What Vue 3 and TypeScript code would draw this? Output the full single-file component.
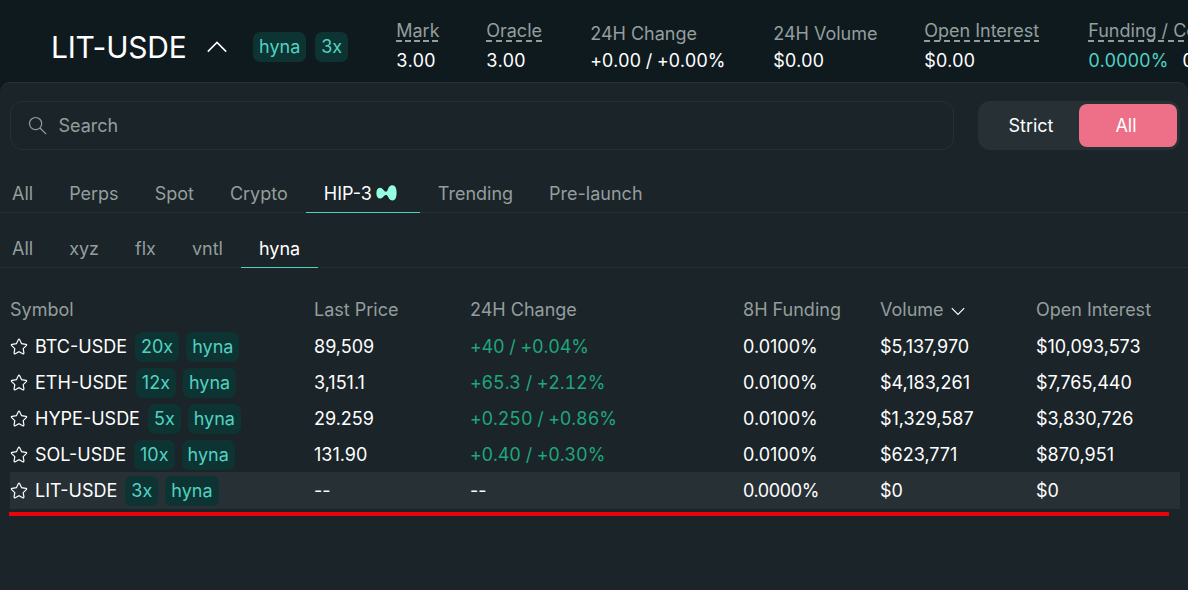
<script setup lang="ts">
interface Stat {
  label: string
  value: string
  dashed: boolean
  slot: string
}
interface Market {
  symbol: string
  leverage: string
  price: string
  change: string
  funding: string
  volume: string
  interest: string
  active?: boolean
}

const stats: Stat[] = [
  { label: 'Mark', value: '3.00', dashed: true, slot: 'mark' },
  { label: 'Oracle', value: '3.00', dashed: true, slot: 'oracle' },
  { label: '24H Change', value: '+0.00 / +0.00%', dashed: false, slot: 'change' },
  { label: '24H Volume', value: '$0.00', dashed: false, slot: 'volume' },
  { label: 'Open Interest', value: '$0.00', dashed: true, slot: 'interest' },
]
const categories = ['All', 'Perps', 'Spot', 'Crypto', 'HIP-3', 'Trending', 'Pre-launch']
const venues = ['All', 'xyz', 'flx', 'vntl', 'hyna']
const columns = ['Symbol', 'Last Price', '24H Change', '8H Funding', 'Volume', 'Open Interest']
const markets: Market[] = [
  { symbol: 'BTC-USDE', leverage: '20x', price: '89,509', change: '+40 / +0.04%', funding: '0.0100%', volume: '$5,137,970', interest: '$10,093,573' },
  { symbol: 'ETH-USDE', leverage: '12x', price: '3,151.1', change: '+65.3 / +2.12%', funding: '0.0100%', volume: '$4,183,261', interest: '$7,765,440' },
  { symbol: 'HYPE-USDE', leverage: '5x', price: '29.259', change: '+0.250 / +0.86%', funding: '0.0100%', volume: '$1,329,587', interest: '$3,830,726' },
  { symbol: 'SOL-USDE', leverage: '10x', price: '131.90', change: '+0.40 / +0.30%', funding: '0.0100%', volume: '$623,771', interest: '$870,951' },
  { symbol: 'LIT-USDE', leverage: '3x', price: '--', change: '--', funding: '0.0000%', volume: '$0', interest: '$0', active: true },
]
</script>

<template>
  <div class="app">
    <header class="top">
      <h1 class="pair">LIT-USDE</h1>
      <svg class="caret" width="20" height="12" viewBox="0 0 20 12"><path d="M.8 10.6 10 1.4l9.2 9.2" /></svg>
      <span class="tag">hyna</span>
      <span class="tag lev">3x</span>
      <div class="stats">
        <div v-for="s in stats" :key="s.label" class="stat" :class="s.slot">
          <span class="label" :class="{ dashed: s.dashed }">{{ s.label }}</span>
          <span class="value">{{ s.value }}</span>
        </div>
        <div class="stat">
          <span class="label dashed">Funding / Countdown</span>
          <span class="value"><span class="teal">0.0000%</span><span>00:29:36</span></span>
        </div>
      </div>
    </header>

    <main class="panel">
      <div class="search-row">
        <div class="search">
          <svg width="20" height="20" viewBox="0 0 20 20"><circle cx="7.6" cy="7.6" r="6.1" /><path d="m12 12 6.2 6.2" /></svg>
          <span>Search</span>
        </div>
        <div class="toggle">
          <span class="option">Strict</span>
          <span class="option on">All</span>
        </div>
      </div>

      <nav class="tabs">
        <span v-for="c in categories" :key="c" class="tab" :class="{ current: c === 'HIP-3' }">
          {{ c }}
          <svg v-if="c === 'HIP-3'" class="logo" width="21" height="16" viewBox="0 0 21 16">
            <path d="M20.600 7.700C20.600 12.500 19.200 15.400 16.500 15.400C13.600 15.400 12.600 13 11.800 11.300C11.200 10.200 10.700 9.900 10 9.900C9 9.900 8.300 10.600 7.500 11.600C6.600 12.700 5.700 13.600 4.100 13.600C1.700 13.600.4 11.300.4 8.200C.4 5.100 1.700 2.800 4 2.800C5.700 2.800 6.600 3.900 7.500 5.100C8.300 6.100 9 6.700 10 6.700C10.700 6.700 11.200 6 11.800 4.700C12.600 2.600 13.600.3 16.500.3C19.200.3 20.600 3.200 20.600 7.700Z" />
          </svg>
        </span>
      </nav>
      <nav class="tabs venues">
        <span v-for="v in venues" :key="v" class="tab" :class="{ current: v === 'hyna' }">{{ v }}</span>
      </nav>

      <section class="table">
        <div class="row head">
          <span v-for="c in columns" :key="c" class="cell">
            {{ c }}
            <svg v-if="c === 'Volume'" class="sort" width="14" height="9" viewBox="0 0 14 9"><path d="m.8 1.200 6.200 6.200 6.200-6.200" /></svg>
          </span>
        </div>
        <div v-for="m in markets" :key="m.symbol" class="row" :class="{ active: m.active }">
          <span class="cell symbol">
            <svg class="star" width="18" height="18" viewBox="0 0 18 18">
              <path d="M8.300 1.800q.7-1.200 1.400 0l1.900 3.900 4.300.6q1.300.3.4 1.300l-3.100 3 .7 4.300q.1 1.300-1.100.8L9 13.700l-3.800 2q-1.200.5-1.100-.8l.7-4.300-3.100-3q-.9-1 .4-1.300l4.300-.6z" />
            </svg>
            <span class="name">{{ m.symbol }}</span>
            <span class="tag lev">{{ m.leverage }}</span>
            <span class="tag">hyna</span>
          </span>
          <span class="cell">{{ m.price }}</span>
          <span class="cell" :class="{ up: m.change !== '--' }">{{ m.change }}</span>
          <span class="cell funding">{{ m.funding }}</span>
          <span class="cell">{{ m.volume }}</span>
          <span class="cell">{{ m.interest }}</span>
        </div>
      </section>
      <div class="marker"></div>
    </main>
  </div>
</template>

<style>
body {
  background: #0f1a1f;
}
</style>

<style scoped>
.app {
  box-sizing: border-box;
  width: 1188px;
  height: 590px;
  overflow: hidden;
  background: #0f1a1f;
  color: #fff;
  font: 400 18px/24px Inter, "Liberation Sans", sans-serif;
}
.app * {
  box-sizing: border-box;
}
svg {
  display: block;
  flex: none;
  fill: none;
  stroke: currentColor;
}
.top {
  display: flex;
  align-items: center;
  height: 82px;
  padding: 12px 0 0 51px;
  white-space: nowrap;
}
.pair {
  flex: none;
  width: 156px;
  margin: 0;
  font-size: 30px;
  line-height: 36px;
  font-weight: 400;
  letter-spacing: -0.2px;
}
.caret {
  margin-right: 26px;
  stroke-width: 1.5;
}
.tag {
  flex: none;
  display: flex;
  align-items: center;
  height: 30px;
  padding: 0 6px;
  border-radius: 7px;
  background: #0e3333;
  color: #50d2c1;
}
.top .lev {
  margin-left: 9px;
}
.stats {
  flex: none;
  display: flex;
  align-items: flex-end;
  height: 54px;
  margin: -2px 0 0 48px;
}
.stat {
  flex: none;
  display: flex;
  flex-direction: column;
  align-items: flex-start;
}
.mark { width: 90px; }
.oracle { width: 104px; }
.change { width: 183px; }
.volume { width: 151px; }
.interest { width: 164px; }
.label {
  height: 27px;
  color: #949e9c;
}
.dashed {
  --period: 10px;
  height: 23px;
  margin-bottom: 7px;
  background: repeating-linear-gradient(90deg, #949e9c 0 6px, transparent 6px var(--period)) left bottom / 100% 2px no-repeat;
}
.mark .dashed {
  --period: 9px;
}
.value {
  display: flex;
  gap: 14px;
  font-variant-numeric: tabular-nums;
  letter-spacing: -0.12px;
}
.teal {
  color: #50d2c1;
}
.panel {
  height: 508px;
  padding-top: 18px;
  background: #1b2429;
  border-top: 1px solid #273035;
  border-radius: 10px 10px 0 0;
}
.search-row {
  display: flex;
  justify-content: space-between;
  height: 49px;
  padding: 0 8px 0 10px;
}
.search {
  display: flex;
  align-items: center;
  gap: 10.5px;
  width: 944px;
  padding-left: 17px;
  border: 1px solid #273035;
  border-radius: 12px;
  color: #949e9c;
}
.search svg {
  stroke-width: 1.2;
}
.toggle {
  display: flex;
  width: 202px;
  padding: 3px;
  border-radius: 12px;
  background: #273035;
}
.option {
  display: flex;
  align-items: center;
  justify-content: center;
  width: 98px;
  padding-left: 2px;
  border-radius: 8px;
}
.option.on {
  padding: 0 4px 0 0;
  background: #ed7088;
}
.option:first-child {
  flex: 1;
}
.tabs {
  display: flex;
  height: 39px;
  margin-top: 24px;
  margin-left: -6px;
  border-bottom: 1px solid #273035;
  color: #949e9c;
}
.tab {
  display: flex;
  height: 39px;
  padding: 8px 18px 0;
  gap: 4px;
}
.current {
  color: #fff;
  border-bottom: 1px solid #50d2c1;
}
.logo {
  margin: 3px 5px 0 0;
  fill: #97fce4;
  stroke: none;
}
.venues {
  height: 40px;
  margin-top: 15px;
}
.venues .tab {
  height: 40px;
  padding-top: 9px;
}
.table {
  padding: 24px 8px 0 10px;
}
.row {
  display: grid;
  grid-template-columns: 304px 156px 273px 137px 156px 1fr;
  align-items: center;
  height: 36px;
  padding-top: 2px;
  white-space: nowrap;
}
.head {
  padding-top: 0;
  color: #949e9c;
}
.cell {
  display: flex;
  align-items: center;
}
.row .tag {
  height: 30px;
}
.sort {
  margin: 2px 0 0 7px;
  color: #fff;
  stroke-width: 1.2;
}
.active {
  height: 37px;
  padding-top: 1px;
  background: #273035;
}
.active .funding {
  letter-spacing: -0.4px;
}
.star {
  margin-right: 7px;
  stroke-width: 1.2;
}
.name {
  margin-right: 8px;
}
.symbol .lev {
  margin-right: 7px;
}
.up {
  color: #1fa67d;
  font-variant-numeric: tabular-nums;
  letter-spacing: -0.12px;
}
.marker {
  width: 1160px;
  height: 4px;
  margin: 3px 0 0 9px;
  background: #e80408;
}
</style>
